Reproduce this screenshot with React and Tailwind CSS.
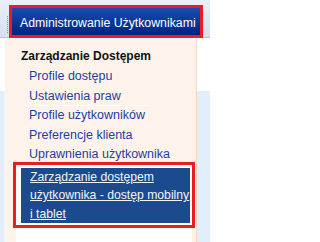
import React from "react";

const items = [
    { label: "Profile dostępu", line: "" },
    { label: "Ustawienia praw", line: "bottom" },
    { label: "Profile użytkowników", line: "" },
    { label: "Preferencje klienta", line: "left" },
    { label: "Uprawnienia użytkownika", line: "" },
];

function MenuItem({ label, line }) {
    if (line === "bottom") {
        return (
            <div className="ml-[20px] pl-[4px] w-[123px] h-[19.6px] leading-[19.6px] border-b border-white whitespace-nowrap">
                {label}
            </div>
        );
    }
    if (line === "left") {
        return (
            <div className="ml-[20px] pl-[3px] h-[19.6px] leading-[19.6px] border-l border-white whitespace-nowrap">
                {label}
            </div>
        );
    }
    return <div className="pl-[24px] h-[19.6px] leading-[19.6px] whitespace-nowrap">{label}</div>;
}

function App() {
    return (
        <div className="w-[210px] h-[242px] overflow-hidden bg-white font-['Liberation_Sans',Arial,sans-serif]">
            {/* top bar */}
            <div className="h-[38px] flex items-start pl-[7px] bg-gradient-to-b from-[#e9f0f9] to-[#d4e1f1] border-b border-[#b6c5d9]">
                <div className="mt-[16px] h-[17px] border-l border-dotted border-[#8797ad]"></div>
                <button className="ml-[4px] mt-[8px] w-[188px] h-[27px] pl-[8px] pt-[9px] text-left flex items-start bg-gradient-to-b from-[#1a4db3] to-[#00237f] text-white text-[12.3px] leading-none whitespace-nowrap outline-3 outline-[#ec1c24]">
                    Administrowanie Użytkownikami
                </button>
            </div>

            <div className="flex h-[204px]">
                <div className="w-[5px] flex flex-col">
                    <div className="h-[53px] bg-white"></div>
                    <div className="flex-1 bg-[#e2eefb] border-r border-[#eef5fd]"></div>
                </div>

                {/* dropdown panel */}
                <div className="w-[192px] bg-[#fdf3ea] border-t border-white border-r border-r-[#f1d6c3] pt-[7px]">
                    <div className="pl-[16px] h-[20px] leading-[20px] text-[12px] font-bold text-[#111111]">
                        Zarządzanie Dostępem
                    </div>
                    <div className="mt-[1px] text-[12.5px] text-[#1f40a4]">
                        {items.map((it) => (
                            <MenuItem key={it.label} label={it.label} line={it.line} />
                        ))}
                    </div>
                    <div className="ml-[11px] w-[176px] bg-white">
                        <div className="h-[60px] pt-[3px] pl-[5px] outline-3 outline-[#ec1c24]">
                            <div className="w-[169px] h-[55px] bg-[#1b4a8e] pl-[9px] text-[12.2px] leading-[18.33px] text-[#f4f4f4] underline decoration-1 whitespace-nowrap">
                                Zarządzanie dostępem
                                <br />
                                użytkownika - dostęp mobilny
                                <br />
                                i tablet
                            </div>
                        </div>
                        <div className="h-[20px]"></div>
                    </div>
                </div>

                <div className="flex-1 flex flex-col">
                    <div className="h-[53px] bg-white"></div>
                    <div className="flex-1 bg-[#e2eefb]"></div>
                </div>
            </div>
        </div>
    );
}

export default App;
